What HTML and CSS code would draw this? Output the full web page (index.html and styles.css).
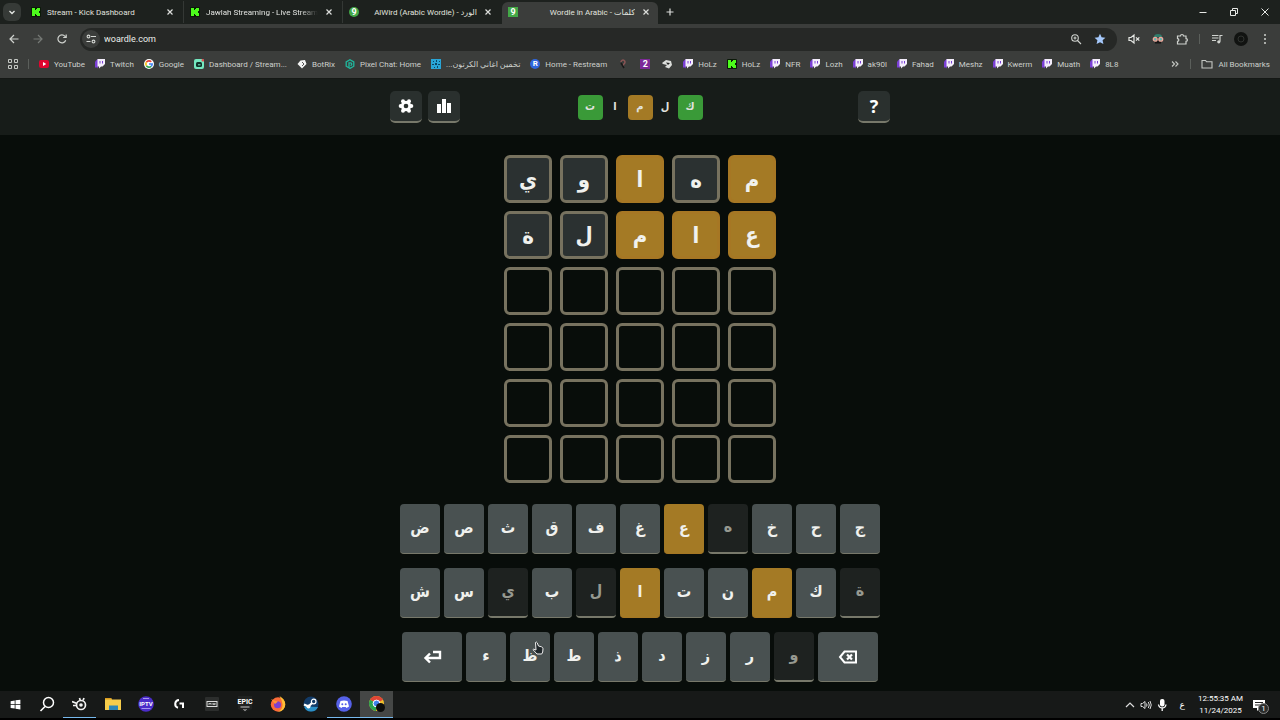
FILE: index.html
```html
<!DOCTYPE html>
<html lang="en">
<head>
  <meta charset="UTF-8" />
  <meta name="viewport" content="width=device-width, initial-scale=1.0"/>
  <title>Wordle in Arabic - كلمات</title>
  <link rel="stylesheet" href="styles.css">
</head>
<body>
  <!-- Shared icons -->
  <svg class="defs" aria-hidden="true">
    <symbol id="kick" viewBox="0 0 10 10"><rect width="10" height="10" rx="1" fill="#0b1a08"/><path d="M1 1h3v2h1V2h1V1h3v3H8v2h1v3H6V8H5V7H4v2H1z" fill="#4dfc1c"/></symbol>
    <symbol id="twitch" viewBox="0 0 10 10"><path d="M1 1.500L3 0v8.500L2.500 10V8.500H0V3z" fill="#7a3fd6"/><path d="M2.500 0H10v5L7.500 7.500H6L4 9.500v-2H2.500z" fill="#f3edfb"/><path d="M5 2v2.500M7.500 2v2.500" stroke="#7a3fd6" stroke-width="1"/></symbol>
    <symbol id="close" viewBox="0 0 10 10"><path d="M2.500 2.500l5 5m0-5l-5 5" stroke="#dcdedb" stroke-width="1.200"/></symbol>
  </svg>

  <!-- Tabs -->
  <div class="tabs">
    <button class="tab-search" aria-label="Search tabs"><svg viewBox="0 0 10 10"><path d="M2.500 4L5 6.500 7.500 4" fill="none" stroke="#e6e8e5" stroke-width="1.300"/></svg></button>
    <div class="tab">
      <svg class="ico"><use href="#kick"/></svg><span class="tab-title">Stream - Kick Dashboard</span>
      <button class="close" aria-label="Close tab"><svg><use href="#close"/></svg></button>
    </div>
    <div class="tab">
      <svg class="ico"><use href="#kick"/></svg><span class="tab-title fade">Jawlah Streaming - Live Stream</span>
      <button class="close" aria-label="Close tab"><svg><use href="#close"/></svg></button>
    </div>
    <div class="tab">
      <span class="ico fav round">9</span><span class="tab-title end">AlWird (Arabic Wordle) - الورد</span>
      <button class="close" aria-label="Close tab"><svg><use href="#close"/></svg></button>
    </div>
    <div class="tab active">
      <span class="ico fav">9</span><span class="tab-title end">Wordle in Arabic - كلمات</span>
      <button class="close" aria-label="Close tab"><svg><use href="#close"/></svg></button>
    </div>
    <button class="new-tab" aria-label="New tab"><svg viewBox="0 0 10 10"><path d="M5 1.500v7M1.500 5h7" stroke="#dcdedb" stroke-width="1.200"/></svg></button>
    <div class="window-buttons">
      <button aria-label="Minimize"><svg viewBox="0 0 10 10"><path d="M1.500 5.500h7" stroke="#e6e8e5"/></svg></button>
      <button aria-label="Restore"><svg viewBox="0 0 10 10"><path d="M1.500 3.500h5v5h-5zM3.500 3.500v-2h5v5h-2" fill="none" stroke="#e6e8e5"/></svg></button>
      <button aria-label="Close window"><svg viewBox="0 0 10 10"><path d="M1.500 1.500l7 7m0-7l-7 7" stroke="#e6e8e5"/></svg></button>
    </div>
  </div>

  <!-- Toolbar -->
  <div class="toolbar">
    <button aria-label="Back"><svg viewBox="0 0 12 12"><path d="M10.500 6h-8M6 2L2 6l4 4" fill="none" stroke="#d0d3cf" stroke-width="1.200"/></svg></button>
    <button aria-label="Forward"><svg viewBox="0 0 12 12"><path d="M1.500 6h8M6 2l4 4-4 4" fill="none" stroke="#767a76" stroke-width="1.200"/></svg></button>
    <button aria-label="Reload"><svg viewBox="0 0 12 12"><path d="M9.700 7.200A4 4 0 1 1 9 3.300l1 1M10.200 1.500v3h-3" fill="none" stroke="#d0d3cf" stroke-width="1.200"/></svg></button>
    <div class="address">
      <button class="site-info" aria-label="Site information"><svg viewBox="0 0 12 12"><g fill="none" stroke="#d5d8d4" stroke-width="1.100"><circle cx="3.500" cy="3.500" r="1.400"/><path d="M6 3.500h5M1.500 8.500h4"/><circle cx="8.500" cy="8.500" r="1.400"/></g></svg></button>
      <input type="text" class="url" value="woardle.com" aria-label="Address">
      <button aria-label="Zoom"><svg viewBox="0 0 12 12"><g fill="none" stroke="#d0d3cf" stroke-width="1.100"><circle cx="5" cy="5" r="3.300"/><path d="M7.500 7.500L11 11M3.500 5h3M5 3.500v3"/></g></svg></button>
      <button aria-label="Bookmark"><svg viewBox="0 0 12 12"><path d="M6 .8l1.600 3.500 3.800.4-2.800 2.600.8 3.800L6 9.200l-3.400 1.900.8-3.800L.6 4.700l3.800-.4z" fill="#a5c8fa"/></svg></button>
    </div>
    <button aria-label="Mute tab"><svg viewBox="0 0 12 12"><path d="M1 4.500h2L6 2v8L3 7.500H1z" fill="none" stroke="#e6e8e5" stroke-width="1.200"/><path d="M8 4.300l3.300 3.400m0-3.400L8 7.700" stroke="#e6e8e5" stroke-width="1.200"/></svg></button>
    <button aria-label="Extension"><svg viewBox="0 0 12 12"><path d="M2 4a4 3 0 0 1 8 0z" fill="#2f7d6c"/><path d="M3 8h6v2.500H3z" fill="#151515"/><circle cx="3.200" cy="6.200" r="1.900" fill="#60b6b0" stroke="#f0a79a" stroke-width="1.300"/><circle cx="8.800" cy="6.200" r="1.900" fill="#60b6b0" stroke="#f0a79a" stroke-width="1.300"/></svg></button>
    <button aria-label="Extensions"><svg viewBox="0 0 12 12"><path d="M1.500 3h3a1.500 1.500 0 0 1 3 0H10v2.600a1.400 1.400 0 0 1 0 2.800V11H1.500V8.300a1.300 1.300 0 0 0 0-2.700z" fill="none" stroke="#d0d3cf" stroke-width="1.200"/></svg></button>
    <span class="sep"></span>
    <button aria-label="Media"><svg viewBox="0 0 12 12"><path d="M1 2.500h6.500M1 5h6.500M1 7.500h4M9 8.500V2.500h2.500" fill="none" stroke="#d0d3cf" stroke-width="1.200"/><circle cx="7.800" cy="8.800" r="1.600" fill="#d0d3cf"/></svg></button>
    <button class="avatar" aria-label="Profile"><svg viewBox="0 0 14 14"><circle cx="7" cy="7" r="7" fill="#111311"/><circle cx="7" cy="7" r="3" fill="none" stroke="#303330"/></svg></button>
    <button aria-label="Menu"><svg viewBox="0 0 12 12" fill="#d0d3cf"><circle cx="6" cy="2" r="1"/><circle cx="6" cy="6" r="1"/><circle cx="6" cy="10" r="1"/></svg></button>
  </div>

  <!-- Bookmarks bar -->
  <div class="bookmarks">
    <a href="#" aria-label="Apps"><svg class="ico" viewBox="0 0 10 10"><path d="M.5.5h3v3h-3zM6.500.5h3v3h-3zM.5 6.500h3v3h-3zM6.500 6.500h3v3h-3z" fill="none" stroke="#c5c8c4"/></svg></a>
    <span class="sep"></span>
    <a href="#"><svg class="ico" viewBox="0 0 10 10"><rect y="1" width="10" height="8" rx="2" fill="#e0052f"/><path d="M4 3l3.200 2L4 7z" fill="#fff"/></svg>YouTube</a>
    <a href="#"><svg class="ico"><use href="#twitch"/></svg>Twitch</a>
    <a href="#"><svg class="ico" viewBox="0 0 10 10"><circle cx="5" cy="5" r="5" fill="#fff"/><g fill="none" stroke-width="1.600"><path d="M2.400 3.200A3.200 3.200 0 0 1 7.300 2.800" stroke="#ea4335"/><path d="M2.400 6.800a3.200 3.200 0 0 1 0-3.600" stroke="#fbbc05"/><path d="M7.200 7.300a3.200 3.200 0 0 1-4.800-.5" stroke="#34a853"/><path d="M5 5h3.200a3.200 3.200 0 0 1-1 2.300" stroke="#4285f4"/></g></svg>Google</a>
    <a href="#"><svg class="ico" viewBox="0 0 10 10"><rect width="10" height="10" rx="2" fill="#74e8c0"/><rect x="2" y="3" width="6" height="5" rx="1.500" fill="#10332a"/><path d="M4 5.800h2.500" stroke="#74e8c0"/><circle cx="8.800" cy="1.300" r="1.300" fill="#e5484d"/></svg>Dashboard / Stream...</a>
    <a href="#"><svg class="ico" viewBox="0 0 10 10"><path d="M3.500 1.500L8 1l1.500 4L5 9.500.5 5z" fill="#f3f4f3"/><path d="M5 3l2 2-2 2" fill="none" stroke="#555"/></svg>BotRix</a>
    <a href="#"><svg class="ico" viewBox="0 0 10 10"><path d="M5 .7l3.800 2.200v4.300L5 9.400 1.200 7.200V2.900z" fill="none" stroke="#20b89e" stroke-width="1.300"/><path d="M4 8.500V3.800h1.500a1.200 1.200 0 0 1 0 2.500" fill="none" stroke="#20b89e" stroke-width="1.300"/></svg>Pixel Chat: Home</a>
    <a href="#"><svg class="ico" viewBox="0 0 10 10"><path d="M0 0h10v10H0z" fill="#29a5d6"/><path d="M2 2h1v1H2zM5 1h1v2H5zM8 2h1v1H8zM1 5h2v1H1zM4 4h2v2H4zM7 5h2v1H7zM3 8h1v1H3zM6 7h1v2H6z" fill="#0b4665"/></svg><span dir="rtl">تخمين اغاني الكرتون...</span></a>
    <a href="#"><span class="ico fav restream">R</span>Home - Restream</a>
    <a href="#" class="solo" aria-label="Bookmark"><svg class="ico" viewBox="0 0 10 10"><path d="M3 3a2 2 0 1 1 3 1.800L5 7" fill="none" stroke="#8a5555" stroke-width="1.500"/><path d="M3 4l3 5" stroke="#191919" stroke-width="1.500"/></svg></a>
    <a href="#" class="solo" aria-label="Bookmark 2"><span class="ico fav two">2</span></a>
    <a href="#" class="solo" aria-label="Bookmark"><svg class="ico" viewBox="0 0 10 10"><path d="M0 4l4-3 5 1 1 4-3 3.500L3 8l2-2-4-1z" fill="#dcdedb"/><path d="M4 3.500l4 .5-2 2z" fill="#222"/></svg></a>
    <a href="#"><svg class="ico"><use href="#twitch"/></svg>HoLz</a>
    <a href="#"><svg class="ico"><use href="#kick"/></svg>HoLz</a>
    <a href="#"><svg class="ico"><use href="#twitch"/></svg>NFR</a>
    <a href="#"><svg class="ico"><use href="#twitch"/></svg>Lozh</a>
    <a href="#"><svg class="ico"><use href="#twitch"/></svg>ak90l</a>
    <a href="#"><svg class="ico"><use href="#twitch"/></svg>Fahad</a>
    <a href="#"><svg class="ico"><use href="#twitch"/></svg>Meshz</a>
    <a href="#"><svg class="ico"><use href="#twitch"/></svg>Kwerm</a>
    <a href="#"><svg class="ico"><use href="#twitch"/></svg>Muath</a>
    <a href="#"><svg class="ico"><use href="#twitch"/></svg>8L8</a>
    <div class="more">
      <button aria-label="More bookmarks"><svg class="ico" viewBox="0 0 10 10"><path d="M2 2.500L4.500 5 2 7.500M5.500 2.500L8 5 5.500 7.500" fill="none" stroke="#c5c8c4" stroke-width="1.100"/></svg></button>
      <span class="sep"></span>
      <a href="#"><svg class="folder" viewBox="0 0 12 10"><path d="M1 1.500h3.500l1 1.200H11V9H1z" fill="none" stroke="#c5c8c4" stroke-width="1.100"/></svg>All Bookmarks</a>
    </div>
  </div>

  <!-- Game header -->
  <header class="header">
    <div class="header-inner">
      <div class="side">
        <button class="icon-btn" aria-label="Settings"><svg viewBox="0 0 16 16"><g fill="#fff"><circle cx="8" cy="8" r="5.200"/><circle cx="5" cy="3.200" r="2"/><circle cx="11" cy="3.200" r="2"/><circle cx="13.300" cy="8" r="2"/><circle cx="11" cy="12.800" r="2"/><circle cx="5" cy="12.800" r="2"/><circle cx="2.700" cy="8" r="2"/></g><circle cx="8" cy="8" r="2.300" fill="#2a302e"/></svg></button>
        <button class="icon-btn" aria-label="Statistics"><svg viewBox="0 0 16 16"><path d="M1 6h4v9H1zM6 1h4v14H6zM11 5h4v10h-4z" fill="#fff"/></svg></button>
      </div>
      <h1 class="logo">
        <span class="green">ت</span><span>ا</span><span class="gold">م</span><span>ل</span><span class="green">ك</span>
      </h1>
      <div class="side right">
        <button class="icon-btn help" aria-label="Help">?</button>
      </div>
    </div>
  </header>

  <main class="game">
    <div class="board">
      <div class="tile gray">ي</div><div class="tile gray">و</div><div class="tile gold">ا</div><div class="tile gray">ه</div><div class="tile gold">م</div>
      <div class="tile gray">ة</div><div class="tile gray">ل</div><div class="tile gold">م</div><div class="tile gold">ا</div><div class="tile gold">ع</div>
      <div class="tile"></div><div class="tile"></div><div class="tile"></div><div class="tile"></div><div class="tile"></div>
      <div class="tile"></div><div class="tile"></div><div class="tile"></div><div class="tile"></div><div class="tile"></div>
      <div class="tile"></div><div class="tile"></div><div class="tile"></div><div class="tile"></div><div class="tile"></div>
      <div class="tile"></div><div class="tile"></div><div class="tile"></div><div class="tile"></div><div class="tile"></div>
    </div>

    <div class="keyboard">
      <div class="row">
        <button class="key">ض</button><button class="key">ص</button><button class="key">ث</button><button class="key">ق</button><button class="key">ف</button><button class="key">غ</button><button class="key gold">ع</button><button class="key used">ه</button><button class="key">خ</button><button class="key">ح</button><button class="key">ج</button>
      </div>
      <div class="row">
        <button class="key">ش</button><button class="key">س</button><button class="key used">ي</button><button class="key">ب</button><button class="key used">ل</button><button class="key gold">ا</button><button class="key">ت</button><button class="key">ن</button><button class="key gold">م</button><button class="key">ك</button><button class="key used">ة</button>
      </div>
      <div class="row">
        <button class="key wide" aria-label="Enter"><svg viewBox="0 0 20 16"><path d="M11 3h7v6H3M8 4.500L3.500 9 8 13.500" fill="none" stroke="#fff" stroke-width="2.400"/></svg></button>
        <button class="key">ء</button>
        <button class="key">ظ<svg class="cursor" viewBox="0 0 12 14"><path d="M3.500 1.500q1-1 1.700.3L6.500 5l3 .8q1.500.5 1.500 2l-.3 3.200-1 2H5L1 8.700q.5-1.200 2 0L4 9z" fill="#20272a" stroke="#eee"/></svg></button>
        <button class="key">ط</button><button class="key">ذ</button><button class="key">د</button><button class="key">ز</button><button class="key">ر</button><button class="key used">و</button>
        <button class="key wide" aria-label="Backspace"><svg viewBox="0 0 20 16"><path d="M6.500 2.500H18v11H6.500L2 8z" fill="none" stroke="#fff" stroke-width="2"/><path d="M9 5.500l5 5m0-5l-5 5" stroke="#fff" stroke-width="2.200"/></svg></button>
      </div>
    </div>
  </main>

  <!-- Taskbar -->
  <footer class="taskbar">
    <button class="start" aria-label="Start"><svg viewBox="0 0 16 16"><path d="M2 4l5-1v4.700H2zM8 2.800L14 2v5.700H8zM2 8.500h5V13l-5-.8zM8 8.500h6V14l-6-.8z" fill="#fff"/></svg></button>
    <button aria-label="Search"><svg viewBox="0 0 16 16"><circle cx="9.500" cy="6.500" r="5" fill="none" stroke="#fff" stroke-width="1.500"/><path d="M6 10.500L1.500 15" stroke="#fff" stroke-width="1.600"/></svg></button>
    <button class="open" aria-label="SteelSeries"><svg viewBox="0 0 16 16"><g fill="none" stroke="#f2f2f2" stroke-width="1.700"><circle cx="9" cy="9" r="4.500"/><path d="M0 5.500l5 2M7.500 2l.8 2.500M12 2l-1 2.500M1 9.500h3.500"/></g><circle cx="9" cy="9" r="1.800" fill="#f2f2f2"/></svg></button>
    <button aria-label="Files"><svg viewBox="0 0 16 16"><path d="M0 2h6l1 1.500h9V14H0z" fill="#f5cc4b"/><path d="M0 2h6l1 1.500H0z" fill="#d99b20"/><path d="M4 14V9.500h9V14z" fill="#2c86b8"/></svg></button>
    <button aria-label="IPTV"><svg viewBox="0 0 16 16"><circle cx="8" cy="8" r="7.800" fill="#4b2cc9"/><path d="M5 2.500h6M3.500 12.500h9" stroke="#a796ee"/><text x="8" y="10" font-size="6" font-weight="bold" text-anchor="middle" fill="#fff">IPTV</text></svg></button>
    <button aria-label="Logitech G"><svg viewBox="0 0 16 16"><path d="M8 4a4 4 0 0 0-1 7.800M8.500 7.500H12V12" fill="none" stroke="#fff" stroke-width="2"/></svg></button>
    <button aria-label="Monitor"><svg viewBox="0 0 16 16"><rect x="1" y="1" width="14" height="14" rx="1" fill="#2c2e2d"/><rect x="3" y="5.500" width="10" height="5" fill="none" stroke="#ddd"/><path d="M5 9V7l1 1 1-1v2M9 9V7l1 2 1-2v2" fill="none" stroke="#ddd" stroke-width=".7"/></svg></button>
    <button aria-label="Epic Games"><svg viewBox="0 0 16 16"><path d="M1 0h14v13l-7 3-7-3z" fill="#202221"/><text x="8" y="8" font-size="7" font-weight="bold" text-anchor="middle" fill="#fff">EPIC</text><path d="M3.500 11h9M6.500 13.500L8 14.300l1.500-.8" fill="none" stroke="#ccc"/></svg></button>
    <button aria-label="Firefox"><svg viewBox="0 0 16 16"><circle cx="8" cy="8.500" r="7.200" fill="#fb6b38"/><path d="M9.500 0q5.500 3 5.700 8A7 7 0 0 1 8 15.700Q13 13 12.500 8 12 4 9.500 0z" fill="#ffbf35"/><circle cx="7.500" cy="8.700" r="3.500" fill="#7b3fd0"/><path d="M1 3l3 1.500 4 1-3 2.500z" fill="#ff9436"/></svg></button>
    <button aria-label="Steam"><svg viewBox="0 0 16 16"><circle cx="8" cy="8" r="7.500" fill="#123b68"/><path d="M1 10.500A7.500 7.500 0 0 0 15 11z" fill="#2b8fc6"/><path d="M1 8.500l4.500 2L10 6" fill="none" stroke="#fff" stroke-width="2.200"/><circle cx="10.700" cy="5.500" r="2.300" fill="#123b68" stroke="#fff" stroke-width="1.200"/><circle cx="5.500" cy="10.500" r="2" fill="#fff"/></svg></button>
    <button class="open" aria-label="Discord"><svg viewBox="0 0 16 16"><circle cx="8" cy="8" r="7.800" fill="#5661e8"/><path d="M4.500 5Q8 4 11.500 5L13 10.500 10.500 12l-.8-1H6.300l-.8 1L3 10.500z" fill="#fff"/><circle cx="6.300" cy="8.200" r="1" fill="#5661e8"/><circle cx="9.700" cy="8.200" r="1" fill="#5661e8"/></svg></button>
    <button class="open current" aria-label="Chrome"><svg viewBox="0 0 16 16"><circle cx="7.500" cy="7.500" r="7.500" fill="#f0bf2c"/><path d="M7.500 7.500L1 3.800a7.500 7.500 0 0 1 13 0z" fill="#e04536"/><path d="M7.500 7.500L1 3.800A7.500 7.500 0 0 0 7 15z" fill="#29a352"/><circle cx="7.500" cy="7.500" r="3.400" fill="#3f83ed" stroke="#fff"/><circle cx="11.500" cy="11.500" r="4.500" fill="#0c0d0c"/></svg></button>
    <div class="tray">
      <svg viewBox="0 0 12 12"><path d="M2 8l4-4 4 4" fill="none" stroke="#ddd" stroke-width="1.200"/></svg>
      <svg viewBox="0 0 12 12"><path d="M1 4.500h1.500L5 2.500v7l-2.500-2H1zM6.500 4.500q1 1.500 0 3M8.300 3q2 3 0 6M10 2q2.500 4 0 8" fill="none" stroke="#ddd"/></svg>
      <svg viewBox="0 0 12 12"><rect x="4" y="0" width="4.500" height="7.500" rx="2" fill="#fff"/><path d="M2.500 5.500Q3 9 6.200 9 9.500 9 10 5.500M6.200 9v3" fill="none" stroke="#fff" stroke-width="1.300"/></svg>
      <span class="lang">ع</span>
      <div class="clock"><time>12:55:35 AM</time><time>11/24/2025</time></div>
      <div class="notify">
        <svg viewBox="0 0 12 12"><path d="M0 1h12v8H7l-3 3V9H0z" fill="#fff"/><path d="M2 3.500h8M2 6h8" stroke="#222"/></svg>
        <span class="badge">1</span>
      </div>
    </div>
  </footer>
</body>
</html>
```

FILE: styles.css
```css
* {
  margin: 0;
  padding: 0;
  box-sizing: border-box;
}
body {
  display: flex;
  flex-direction: column;
  min-height: 100vh;
  background: #080d0a;
  color: #e0e2df;
  font-family: Roboto, "DejaVu Sans", sans-serif;
  font-size: 8px;
}
button {
  display: flex;
  align-items: center;
  justify-content: center;
  flex-shrink: 0;
  border: none;
  background: none;
  color: inherit;
  font-family: inherit;
  cursor: pointer;
}
a {
  color: inherit;
  text-decoration: none;
}
svg {
  display: block;
  flex-shrink: 0;
}
.defs {
  position: absolute;
  width: 0;
  height: 0;
}
.ico {
  width: 10px;
  height: 10px;
  flex-shrink: 0;
}
.fav {
  background: #43a847;
  color: #fff;
  font-size: 9px;
  line-height: 10px;
  font-weight: bold;
  text-align: center;
}
.round {
  border-radius: 50%;
}
.restream {
  background: #2f66dc;
  border-radius: 50%;
  font-size: 8px;
}
.two {
  background: #7d2a98;
}
.sep {
  width: 1px;
  height: 10px;
  background: #5b5f5b;
}

/* Tabs */
.tabs {
  display: flex;
  align-items: center;
  height: 24px;
  background: #1d211e;
}
.tab-search {
  width: 18px;
  height: 18px;
  margin: 0 4px 0 3px;
  border-radius: 6px;
  background: #363a37;
}
.tab-search svg, .new-tab svg, .close svg {
  width: 10px;
  height: 10px;
}
.tab {
  display: flex;
  align-items: center;
  flex: 0 1 159px;
  min-width: 0;
  height: 22px;
  padding: 0 8px 0 6px;
  gap: 6px;
  border-right: 1px solid #343835;
}
.tab:nth-of-type(3) {
  border-color: transparent;
}
.tab.active {
  align-self: flex-end;
  flex-basis: 156px;
  padding-right: 7px;
  padding-bottom: 2px;
  background: #3b3d3b;
  border: none;
  border-radius: 6px 6px 0 0;
}
.tab-title {
  flex: 1;
  overflow: hidden;
  white-space: nowrap;
}
.tab-title.end {
  text-align: right;
}
.tab-title.fade {
  mask-image: linear-gradient(to right, #000 85%, transparent);
}
.new-tab {
  width: 24px;
}
.window-buttons {
  display: flex;
  margin-left: auto;
}
.window-buttons button {
  width: 31px;
  height: 22px;
}
.window-buttons svg {
  width: 10px;
  height: 10px;
}

/* Toolbar */
.toolbar {
  display: flex;
  align-items: center;
  height: 30px;
  padding: 0 3px 0 2px;
  background: #3b3d3b;
}
.toolbar button {
  width: 24px;
  height: 22px;
}
.toolbar svg {
  width: 12px;
  height: 12px;
}
.toolbar .avatar svg {
  width: 14px;
  height: 14px;
}
.toolbar .sep {
  margin: 0 5px;
}
.address {
  display: flex;
  align-items: center;
  flex: 1;
  height: 23px;
  margin: 0 5px 0 6px;
  padding: 0 5px 0 2px;
  border-radius: 12px;
  background: #262826;
}
.address .site-info {
  width: 18px;
  height: 18px;
  border-radius: 50%;
  background: #3b3d3b;
}
.url {
  flex: 1;
  min-width: 0;
  margin-left: 4px;
  border: none;
  outline: none;
  background: none;
  color: #eceeeb;
  font-family: inherit;
  font-size: 9px;
}

/* Bookmarks */
.bookmarks {
  display: flex;
  align-items: center;
  height: 25px;
  padding: 0 10px 4px 8px;
  gap: 10px;
  background: #3b3d3b;
  border-bottom: 1px solid #151815;
  color: #cdd0cc;
  white-space: nowrap;
}
.bookmarks a {
  display: flex;
  align-items: center;
  gap: 5px;
}
.bookmarks .solo {
  padding: 0 1px;
}
.bookmarks .folder {
  width: 12px;
  height: 10px;
}
.more {
  display: flex;
  align-items: center;
  gap: 10px;
  margin-left: auto;
}

/* Header */
.header {
  background: #171c19;
}
.header-inner {
  display: flex;
  align-items: center;
  max-width: 500px;
  height: 56px;
  margin: 0 auto;
}
.side {
  display: flex;
  flex: 1;
  gap: 6px;
}
.side.right {
  justify-content: flex-end;
}
.icon-btn {
  width: 32px;
  height: 32px;
  border-bottom: 2px solid #77786a;
  border-radius: 5px;
  background: #2a302e;
}
.icon-btn svg {
  width: 16px;
  height: 16px;
}
.help {
  color: #fff;
  font-family: "Open Sans", sans-serif;
  font-size: 18px;
  font-weight: bold;
}
.logo {
  display: flex;
  font-family: "DejaVu Sans Condensed", "DejaVu Sans", sans-serif;
  font-size: 11px;
  line-height: 24px;
}
.logo span {
  width: 25px;
  height: 25px;
  border-radius: 4px;
  text-align: center;
}
.logo .green {
  background: #3a9a38;
}
.logo .gold, .tile.gold, .key.gold {
  background: #a47a25;
}

/* Board */
.game {
  display: flex;
  flex-direction: column;
  align-items: center;
  flex: 1;
  gap: 21px;
  padding-top: 20px;
  font-family: "DejaVu Sans Condensed", "DejaVu Sans", sans-serif;
}
.board {
  display: grid;
  grid-template-columns: repeat(5, 48px);
  gap: 8px;
}
.tile {
  height: 48px;
  border: 3px solid #77725f;
  border-radius: 6px;
  color: #f0f1ee;
  font-size: 22px;
  font-weight: bold;
  line-height: 43px;
  text-align: center;
}
.tile.gray {
  background: #2b3131;
}
.tile.gold {
  border-color: #a67724;
}

/* Keyboard */
.keyboard {
  display: flex;
  flex-direction: column;
  gap: 14px;
}
.row {
  display: flex;
  justify-content: center;
  gap: 4px;
}
.key {
  position: relative;
  width: 40px;
  height: 50px;
  padding-bottom: 3px;
  border-bottom: 1px solid #77786a;
  border-radius: 4px;
  background: #495151;
  color: #f0f1ee;
  font-family: inherit;
  font-size: 16px;
  font-weight: bold;
}
.key.gold {
  border-color: #a67724;
}
.key.used {
  border-bottom-width: 2px;
  background: #1e2220;
  color: #969990;
}
.key.wide {
  width: 60px;
  padding-bottom: 0;
}
.key.wide svg {
  width: 20px;
  height: 16px;
}
.cursor {
  position: absolute;
  top: 9px;
  left: 22px;
  width: 12px;
  height: 14px;
}

/* Taskbar */
.taskbar {
  display: flex;
  height: 29px;
  background: #171918;
  border-bottom: 2px solid #000;
}
.taskbar button {
  width: 33px;
  border-bottom: 1px solid transparent;
}
.taskbar .start {
  width: 30px;
}
.taskbar button svg {
  width: 16px;
  height: 16px;
}
.taskbar .start svg {
  width: 13px;
  height: 13px;
}
.taskbar .open {
  border-color: #76b9ed;
}
.taskbar .current {
  background: #454746;
}
.tray {
  display: flex;
  align-items: center;
  gap: 4px;
  margin-left: auto;
  padding-right: 15px;
  color: #fff;
}
.tray svg {
  width: 12px;
  height: 12px;
}
.lang {
  margin: 0 9px 0 8px;
  font-family: "DejaVu Sans", sans-serif;
  font-size: 9px;
}
.clock {
  display: flex;
  flex-direction: column;
  align-items: center;
  line-height: 12px;
}
.notify {
  position: relative;
  margin-left: 6px;
}
.badge {
  position: absolute;
  top: 4px;
  left: 5px;
  width: 11px;
  height: 11px;
  border: 1px solid #888;
  border-radius: 50%;
  background: #2b2d2c;
  line-height: 9px;
  text-align: center;
}
```
